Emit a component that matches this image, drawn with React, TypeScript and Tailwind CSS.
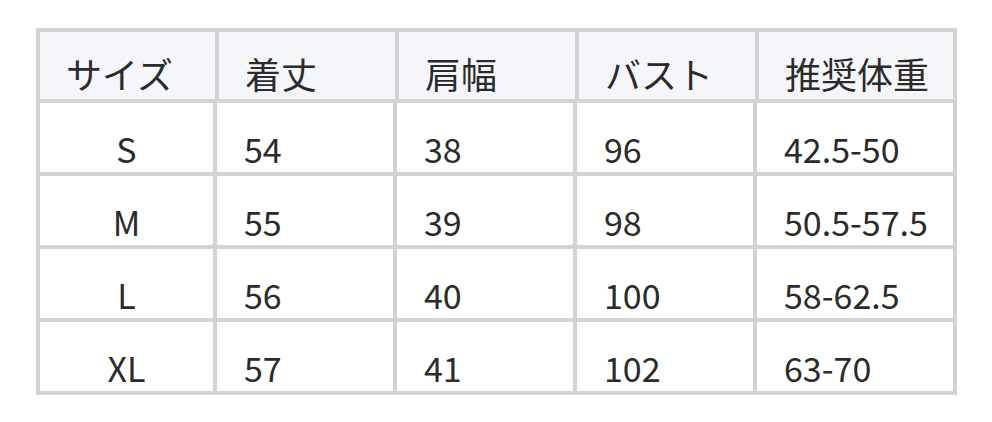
import React from "react";

const headers = ["サイズ", "着丈", "肩幅", "バスト", "推奨体重"];

const rows = [
  ["S", "54", "38", "96", "42.5-50"],
  ["M", "55", "39", "98", "50.5-57.5"],
  ["L", "56", "40", "100", "58-62.5"],
  ["XL", "57", "41", "102", "63-70"],
];

export default function App() {
  return (
    <div
      className="w-[992px] h-[422px] bg-white pt-[28px] pl-[36px] text-[#2b2b2b]"
      style={{ fontFamily: '"Noto Sans CJK JP", "Noto Sans", sans-serif' }}
    >
      <div className="w-[921px] bg-[#d3d3d3] p-[4px] flex flex-col gap-[4px]">
        {/* Header row */}
        <div className="grid grid-cols-[175px_176px_176px_176px_194px] gap-[4px]">
          {headers.map((h) => (
            <div key={h} className="h-[67px] bg-[#f5f6fa] pl-[26px] pt-[23px] text-[36px] leading-[36px]">
              {h}
            </div>
          ))}
        </div>

        {/* Size rows */}
        {rows.map((row) => (
          <div key={row[0]} className="grid grid-cols-[173px_176px_176px_176px_196px] gap-[4px]">
            {row.map((cell, i) => (
              <div
                key={i}
                className={`h-[69px] bg-white pt-[29px] text-[34px] leading-[34px] ${
                  i === 0 ? "text-center" : "pl-[27px]"
                }`}
              >
                {cell}
              </div>
            ))}
          </div>
        ))}
      </div>
    </div>
  );
}
